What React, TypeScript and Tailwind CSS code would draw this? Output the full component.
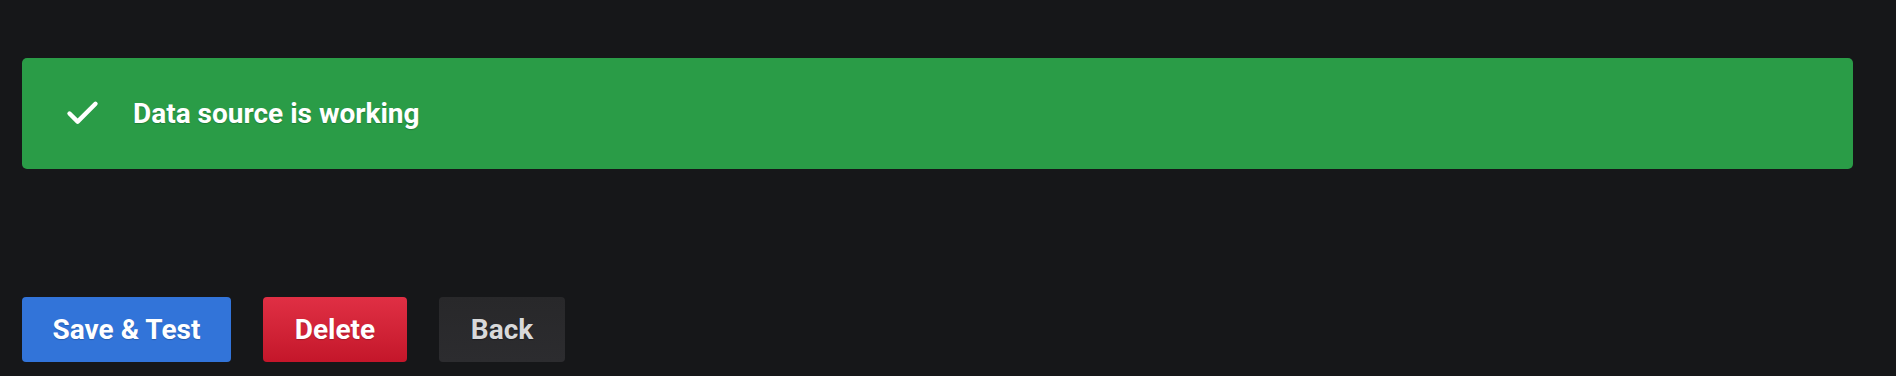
import { Check } from 'lucide-react'

export default function App() {
  return (
    <div
      className="w-[1896px] h-[376px] bg-[#161719] pl-[22px] pr-[43px] pt-[58px]"
      style={{ fontFamily: 'Roboto, "Liberation Sans", sans-serif' }}
    >
      {/* Alert */}
      <div className="h-[111px] rounded-[5px] bg-[#2a9c47] flex items-center pl-[41px]">
        <Check className="w-[39px] h-[39px] text-white" strokeWidth={2.7} />
        <span className="ml-[31px] text-[28px] font-bold text-white [text-shadow:0_1px_1px_rgba(0,0,0,0.2)]">
          Data source is working
        </span>
      </div>

      {/* Buttons */}
      <div className="flex gap-[32px] mt-[128px]">
        <button className="h-[65px] w-[209px] rounded-[4px] bg-[#3274d9] text-white text-[28px] font-bold [text-shadow:0_1px_1px_rgba(0,0,0,0.2)]">
          Save &amp; Test
        </button>
        <button className="h-[65px] w-[144px] rounded-[4px] bg-gradient-to-b from-[#e02f44] to-[#c4162a] text-white text-[28px] font-bold [text-shadow:0_1px_1px_rgba(0,0,0,0.2)]">
          Delete
        </button>
        <button className="h-[65px] w-[126px] rounded-[4px] bg-gradient-to-b from-[#28282a] to-[#2c2c2f] text-[#d8d9da] text-[28px] font-bold [text-shadow:0_1px_1px_rgba(0,0,0,0.3)]">
          Back
        </button>
      </div>
    </div>
  )
}
